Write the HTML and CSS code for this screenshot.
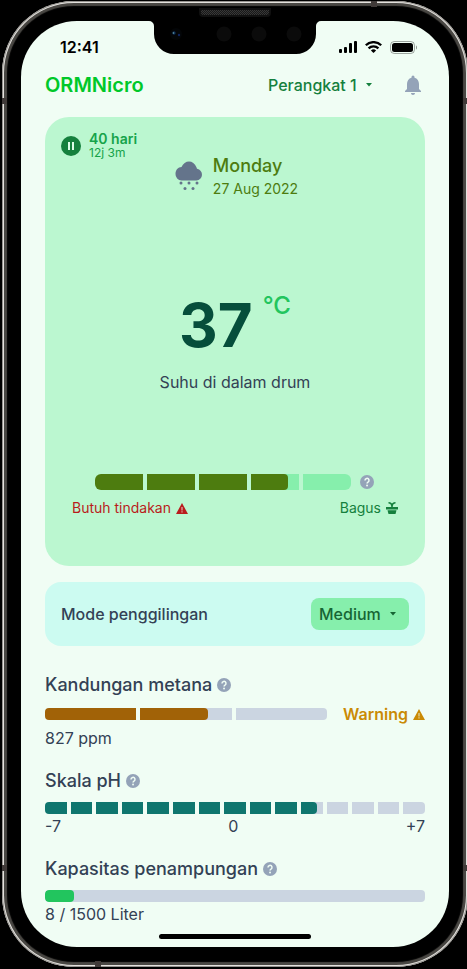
FILE: index.html
```html
<!DOCTYPE html>
<html lang="id">
<head>
<meta charset="utf-8">
<meta name="viewport" content="width=device-width, initial-scale=1">
<title>ORMNicro</title>
<link rel="stylesheet" href="styles.css">
</head>
<body>
<svg class="sprite" aria-hidden="true">
  <symbol id="help" viewBox="0 0 14 14"><circle cx="7" cy="7" r="7" fill="#94a3b8"/><path d="M5 5.500a2 2 0 1 1 3 1.600c-.7.45-.95.7-.95 1.500" fill="none" stroke="#f0fdf4" stroke-width="1.500"/><circle cx="7.050" cy="10.500" r=".95" fill="#f0fdf4"/></symbol>
  <symbol id="warn" viewBox="0 0 12 11"><path d="M6 0l6 11H0z" fill="currentColor"/><path d="M6 4v3.400M6 8.300v1.200" class="warn-mark" stroke-width="1.100"/></symbol>
  <symbol id="caret" viewBox="0 0 6 4"><path d="M0 0h6L3 3.400z" fill="currentColor"/></symbol>
</svg>
<div class="phone">
  <span class="band band-top"></span>
  <span class="band band-left-top"></span>
  <span class="band band-left-bottom"></span>
  <span class="band band-right-top"></span>
  <span class="band band-right-bottom"></span>
  <span class="band band-bottom"></span>
  <span class="speaker"></span>
  <div class="screen">
    <div class="notch">
      <svg viewBox="0 0 172 33" width="172" height="33" aria-hidden="true">
        <path d="M0 0h172a5 5 0 0 0-5 5v8a20 20 0 0 1-20 20H25A20 20 0 0 1 5 13V5a5 5 0 0 0-5-5z" fill="#000"/>
        <circle cx="27" cy="13" r="6" fill="#030507"/><circle cx="25" cy="12" r="1.700" fill="#0b2a55"/><circle cx="24.500" cy="12" r=".8" fill="#6faaa9"/><circle cx="30" cy="14" r="1.200" fill="#10235c"/>
        <circle cx="75" cy="13" r="7.500" fill="#0b0b0b"/><circle cx="110" cy="13" r="7.500" fill="#0b0b0b"/><circle cx="145" cy="13" r="7.500" fill="#0b0b0b"/>
      </svg>
    </div>
    <div class="status">
      <time class="clock">12:41</time>
      <div class="status-icons">
        <svg width="18" height="12" viewBox="0 0 18 12" aria-label="Sinyal"><g><rect y="8" width="3" height="4" rx="1"/><rect x="5" y="6" width="3" height="6" rx="1"/><rect x="10" y="2" width="3" height="10" rx="1"/><rect x="15" width="3" height="12" rx="1"/></g></svg>
        <svg width="17" height="12" viewBox="0 0 17 12" aria-label="Wi-Fi"><g fill="none" stroke="#000" stroke-width="2.300"><path d="M.8 4.300a10.900 10.900 0 0 1 15.400 0"/><path d="M3.600 7.400a6.900 6.900 0 0 1 9.800 0"/></g><path d="M5.900 9.500a3.800 3.800 0 0 1 5.200 0L8.500 12z"/></svg>
        <svg width="27" height="13" viewBox="0 0 27 13" aria-label="Baterai"><rect x=".5" y=".5" width="24" height="12" rx="3.800" fill="none" stroke="#000" opacity=".35"/><rect x="2" y="2" width="21" height="9" rx="2.500"/><path d="M26 4.500v4c1.300-.6 1.300-3.400 0-4z" opacity=".4"/></svg>
      </div>
    </div>
    <header class="header">
      <h1 class="brand">ORMNicro</h1>
      <div class="dropdown device">
        <select aria-label="Perangkat"><option>Perangkat 1</option></select>
        <svg class="caret" aria-hidden="true"><use href="#caret"/></svg>
      </div>
      <button class="bell" type="button" aria-label="Notifikasi">
        <svg width="24" height="24" viewBox="0 0 24 24"><path fill="currentColor" d="M12 22c1.100 0 2-.9 2-2h-4c0 1.100.9 2 2 2zm6-6v-5c0-3.070-1.630-5.640-4.500-6.320V4a1.500 1.500 0 0 0-3 0v.68C7.640 5.360 6 7.920 6 11v5l-2 2v1h16v-1z"/></svg>
      </button>
    </header>
    <main>
      <section class="overview">
        <div class="top">
          <div class="runtime">
            <button class="pause" type="button" aria-label="Jeda"><svg width="20" height="20" viewBox="0 0 20 20"><circle cx="10" cy="10" r="10" fill="#15803d"/><path d="M7 6h2v8H7zM11 6h2v8h-2z" fill="#dcfce7"/></svg></button>
            <div><div class="days">40 hari</div><div class="hours">12j 3m</div></div>
          </div>
          <div class="today">
            <svg width="28" height="32" viewBox="0 0 28 32" fill="#64748b" aria-label="Hujan"><path d="M6.500 19.500a6.200 6.200 0 0 1-6-6.500c0-4 2.500-7 6-7C8 2.500 11 .5 14 .5s6 2 7.300 5.500c.4 1 .5 1.200.8 1.800a5.900 5.900 0 0 1-.6 11.700z"/><circle cx="6" cy="22" r="1.500"/><circle cx="14" cy="22" r="1.500"/><circle cx="22" cy="22" r="1.500"/><circle cx="10" cy="27.500" r="1.500"/><circle cx="18" cy="27.500" r="1.500"/></svg>
            <div><div class="weekday">Monday</div><div class="date">27 Aug 2022</div></div>
          </div>
        </div>
        <div class="temperature"><span class="value">37</span><span class="unit">°C</span></div>
        <p class="caption">Suhu di dalam drum</p>
        <div class="health">
          <div class="meter health-meter"><span><i></i></span><span><i></i></span><span><i></i></span><span><i class="last" style="width:77%"></i></span><span></span></div>
          <svg class="help"><use href="#help"/></svg>
        </div>
        <div class="legend">
          <span class="bad">Butuh tindakan <svg class="warn"><use href="#warn"/></svg></span>
          <span class="good">Bagus <svg width="12" height="12" viewBox="0 0 12 12" fill="none" aria-hidden="true"><path d="M2.500.8c2 0 3.200 1 3.500 3C6.300 1.800 7.500.8 9.500.8M6 3v3" stroke="currentColor" stroke-width="1.600"/><path d="M0 5h12v2.500H0zM1.500 8.300h9L9.500 12h-7z" fill="currentColor"/></svg></span>
        </div>
      </section>
      <section class="mode">
        <label for="mode">Mode penggilingan</label>
        <div class="dropdown speed">
          <select id="mode"><option>Medium</option></select>
          <svg class="caret" aria-hidden="true"><use href="#caret"/></svg>
        </div>
      </section>
      <section class="metric methane">
        <h2>Kandungan metana <svg class="help"><use href="#help"/></svg></h2>
        <div class="row">
          <div class="meter methane-meter"><span><i></i></span><span><i class="last" style="width:74%"></i></span><span></span></div>
          <strong class="warning">Warning <svg class="warn"><use href="#warn"/></svg></strong>
        </div>
        <p>827 ppm</p>
      </section>
      <section class="metric">
        <h2>Skala pH <svg class="help"><use href="#help"/></svg></h2>
        <div class="meter ph-meter"><span><i></i></span><span><i></i></span><span><i></i></span><span><i></i></span><span><i></i></span><span><i></i></span><span><i></i></span><span><i></i></span><span><i></i></span><span><i></i></span><span><i class="last" style="width:74%"></i></span><span></span><span></span><span></span><span></span></div>
        <div class="scale"><span>-7</span><span>0</span><span>+7</span></div>
      </section>
      <section class="metric">
        <h2>Kapasitas penampungan <svg class="help"><use href="#help"/></svg></h2>
        <div class="meter capacity-meter"><span><i class="last" style="width:7.6%"></i></span></div>
        <p>8 / 1500 Liter</p>
      </section>
    </main>
    <div class="home"></div>
  </div>
</div>
</body>
</html>
```
FILE: styles.css
```css
* { box-sizing: border-box; }
html { background: #000; }
body {
  margin: 0;
  padding: 1px 0 1px 2px;
  overflow: hidden;
  background: #000;
  color: #334155;
  font: 16px/24px Inter, "Liberation Sans", sans-serif;
}
h1, h2, p { margin: 0; }
svg { display: block; flex: none; }
.sprite { position: absolute; width: 0; height: 0; }
button, select {
  appearance: none;
  margin: 0;
  padding: 0;
  border: 0;
  background: none;
  color: inherit;
  font: inherit;
}

/* Phone body */
.phone {
  position: relative;
  margin-right: -1px;
  padding: 20px 19px;
  border-radius: 72px;
  background: #000;
  box-shadow: inset 0 0 1px 1px #8c8a86, inset 0 0 0 2px #eeece8, inset 0 0 1px 5px #4a4844;
}
.band { position: absolute; background: #403a38; }
.band-top { top: 0; right: 91px; width: 6px; height: 6px; }
.band-bottom { bottom: 0; left: 93px; width: 6px; height: 6px; }
.band-left-top { top: 97px; left: 0; width: 5px; height: 6px; }
.band-right-top { top: 97px; right: 0; width: 5px; height: 6px; }
.band-left-bottom { bottom: 96px; left: 0; width: 5px; height: 6px; }
.band-right-bottom { bottom: 96px; right: 0; width: 5px; height: 6px; }
.speaker {
  position: absolute;
  top: 7px;
  left: 50%;
  width: 72px;
  height: 9px;
  margin-left: -36px;
  border: 2px solid #101010;
  border-radius: 0 0 4px 4px;
  background: repeating-conic-gradient(#383838 0 25%, #181818 0 50%) 0 0 / 2px 2px;
}
.screen {
  position: relative;
  padding: 0 24px 8px;
  border-radius: 56px;
  background: #f0fdf4;
}
.notch { position: absolute; top: 0; left: 50%; margin-left: -86px; }
.status {
  display: flex;
  justify-content: space-between;
  align-items: center;
  height: 44px;
  padding: 8px 8px 0 15px;
  color: #000;
}
.clock { font-weight: 600; line-height: 20px; }
.status-icons { display: flex; align-items: center; gap: 8px; }

.header { display: flex; align-items: center; height: 40px; margin-bottom: 12px; }
.brand { flex: 1; color: #00c829; font-size: 20px; font-weight: 600; line-height: 28px; }
.bell { margin-left: 28px; color: #94a3b8; }
.dropdown { display: grid; align-items: center; font-weight: 500; }
.dropdown > * { grid-area: 1 / 1; }
.dropdown .caret { width: 6px; height: 4px; justify-self: end; pointer-events: none; }
.device { color: #15803d; }
.device select { padding-right: 16px; }
.device .caret { margin-right: 1px; }

/* Drum overview */
.overview {
  padding: 15px 0 48px;
  border-radius: 24px;
  background: #bbf7d0;
}
.top { display: grid; }
.top > * { grid-area: 1 / 1; }
.runtime { display: flex; align-self: start; align-items: center; gap: 8px; padding-left: 16px; line-height: 14px; }
.days { color: #16a34a; font-size: 14px; font-weight: 600; }
.hours { color: #16a34a; font-size: 12px; }
.today { display: flex; justify-content: center; align-items: center; gap: 10px; padding: 22px 0 0 3px; }
.weekday { color: #4d7c0f; font-size: 18px; font-weight: 500; }
.date { color: #4d7c0f; font-size: 14px; line-height: 22px; }
.temperature { display: flex; justify-content: center; gap: 10px; margin-top: 90px; }
.value { color: #064e3b; font-size: 60px; font-weight: 700; line-height: 70px; }
.unit { color: #22c55e; font-size: 24px; font-weight: 500; line-height: 32px; }
.caption { margin-top: 10px; text-align: center; }
.health { display: flex; align-items: center; gap: 9px; margin-top: 80px; padding: 0 51px 0 50px; }
.legend { display: flex; justify-content: space-between; margin-top: 8px; padding: 0 27px; font-size: 14px; line-height: 20px; }
.legend span { display: flex; align-items: center; gap: 5px; }
.bad { color: #b91c1c; }
.good { color: #15803d; }
.help { width: 14px; height: 14px; }
.warn { width: 12px; height: 11px; }
.warn-mark { stroke: #f0fdf4; opacity: .75; }

/* Segmented bars */
.meter { display: flex; flex: 1; gap: 4px; height: 12px; overflow: hidden; border-radius: 4px; }
.meter span { flex: 1; background: #cbd5e1; }
.meter i { display: block; height: 100%; }
.meter .last { border-radius: 0 4px 4px 0; }
.health-meter { height: 16px; border-radius: 6px; }
.health-meter span { background: #86efac; }
.health-meter i { background: #4d7c0f; }
.methane-meter i { background: #a16207; }
.ph-meter i { background: #0f766e; }
.capacity-meter i { background: #22c55e; }
.meter.capacity-meter .last { border-radius: 4px; }

.mode {
  display: flex;
  justify-content: space-between;
  align-items: center;
  margin-top: 16px;
  padding: 16px;
  border-radius: 16px;
  background: #ccfbf1;
  font-weight: 500;
}
.speed { border-radius: 8px; background: #86efac; color: #166534; }
.speed select { height: 32px; padding: 0 28px 0 8px; }
.speed .caret { margin-right: 13px; }

.metric { margin-top: 18px; }
.methane { margin-top: 26px; }
.metric h2 { display: flex; align-items: center; gap: 5px; margin-bottom: 8px; font-size: 18px; font-weight: 500; line-height: 26px; }
.metric p, .scale { line-height: 24px; }
.row { display: flex; align-items: center; gap: 16px; height: 16px; margin-bottom: 4px; }
.warning { display: flex; align-items: center; gap: 5px; color: #ca8a04; font-weight: 600; }
.scale { display: flex; justify-content: space-between; }
.home { width: 152px; height: 5px; margin: 8px auto 0; border-radius: 4px; background: #000; }
```
